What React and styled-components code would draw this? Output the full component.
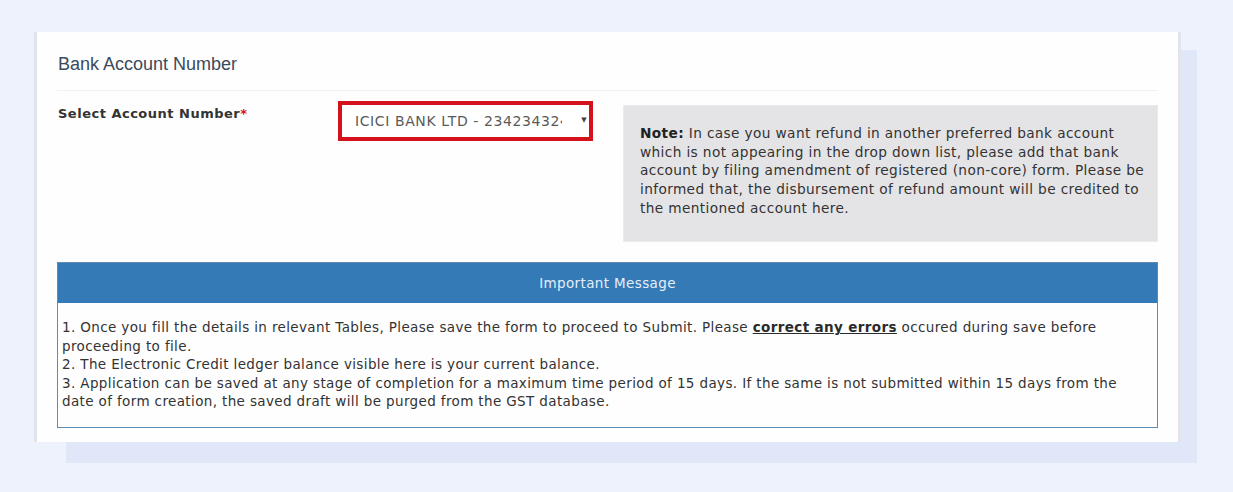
import React from "react";
import styled, { createGlobalStyle } from "styled-components";

const GlobalStyle = createGlobalStyle`
  body {
    margin: 0;
    background: #eef2fd;
    font-family: "DejaVu Sans", Verdana, sans-serif;
    font-size: 13.5px;
    line-height: 18.6px;
    letter-spacing: 0.37px;
    color: #333;
  }
  * { box-sizing: border-box; }
`;

const Page = styled.div`
  padding: 32px 0 40px 34px;
  isolation: isolate;
`;

const Card = styled.div`
  position: relative;
  width: 1147px;
  height: 410px;
  padding: 0 20px;
  background: #fefefe;
  border-left: 3px solid #e2e4eb;
  border-right: 3px solid #e2e4eb;
  &::before {
    content: "";
    position: absolute;
    left: 29px;
    right: -19px;
    top: 18px;
    bottom: -21px;
    background: #e0e7f8;
    z-index: -1;
  }
`;

const Heading = styled.h4`
  margin: 0;
  padding: 22px 0 16px 1px;
  font-family: "Liberation Sans", Arial, sans-serif;
  font-weight: normal;
  font-size: 18px;
  line-height: 20px;
  letter-spacing: 0;
  color: #3b4a5c;
  border-bottom: 1px solid #eff1f4;
`;

const FormRow = styled.div`
  display: flex;
  align-items: flex-start;
  margin-top: 10px;
`;

const Label = styled.label`
  width: 281px;
  margin-top: 4px;
  padding-left: 1px;
  font-size: 13px;
  font-weight: bold;
  letter-spacing: 0.5px;
  color: #333;
  span {
    color: #d9101b;
  }
`;

const SelectBox = styled.div`
  display: flex;
  align-items: center;
  width: 255px;
  height: 40px;
  padding: 0 2px 0 13px;
  border: 4px solid #d3121c;
  background: #fff;
`;

const SelectText = styled.span`
  width: 207px;
  overflow: hidden;
  white-space: nowrap;
  font-size: 14px;
  letter-spacing: 0.6px;
  color: #5a5a5a;
`;

const Caret = styled.span`
  margin-left: auto;
  font-size: 7px;
  color: #444;
  transform: translateY(-1px);
`;

const Note = styled.div`
  flex: 1;
  margin: 4px 0 0 30px;
  height: 137px;
  padding: 18px 10px 0 16px;
  font-size: 13.7px;
  line-height: 18.7px;
  background: #e4e4e6;
  border: 1px solid #ebebec;
  color: #333;
  b { color: #222; }
`;

const Panel = styled.div`
  margin-top: 20px;
  border: 1px solid #5f8bb3;
`;

const PanelHeader = styled.div`
  height: 40px;
  display: flex;
  align-items: center;
  justify-content: center;
  background: #337ab7;
  color: #e6eff8;
`;

const PanelBody = styled.div`
  padding: 15px 15px 16px 4px;
  color: #333;
  b {
    text-decoration: underline;
    color: #2b2b2b;
  }
`;

export default function App() {
  return (
    <>
      <GlobalStyle />
      <Page>
        <Card>
          <Heading>Bank Account Number</Heading>
          <FormRow>
            <Label>
              Select Account Number<span>*</span>
            </Label>
            <SelectBox>
              <SelectText>ICICI BANK LTD - 234234324</SelectText>
              <Caret>▼</Caret>
            </SelectBox>
            <Note>
              <b>Note:</b> In case you want refund in another preferred bank account
              which is not appearing in the drop down list, please add that bank
              account by filing amendment of registered (non-core) form. Please be
              informed that, the disbursement of refund amount will be credited to
              the mentioned account here.
            </Note>
          </FormRow>
          <Panel>
            <PanelHeader>Important Message</PanelHeader>
            <PanelBody>
              1. Once you fill the details in relevant Tables, Please save the form to
              proceed to Submit. Please <b>correct any errors</b> occured during save
              before proceeding to file.
              <br />
              2. The Electronic Credit ledger balance visible here is your current
              balance.
              <br />
              3. Application can be saved at any stage of completion for a maximum time
              period of 15 days. If the same is not submitted within 15 days from the
              date of form creation, the saved draft will be purged from the GST
              database.
            </PanelBody>
          </Panel>
        </Card>
      </Page>
    </>
  );
}
